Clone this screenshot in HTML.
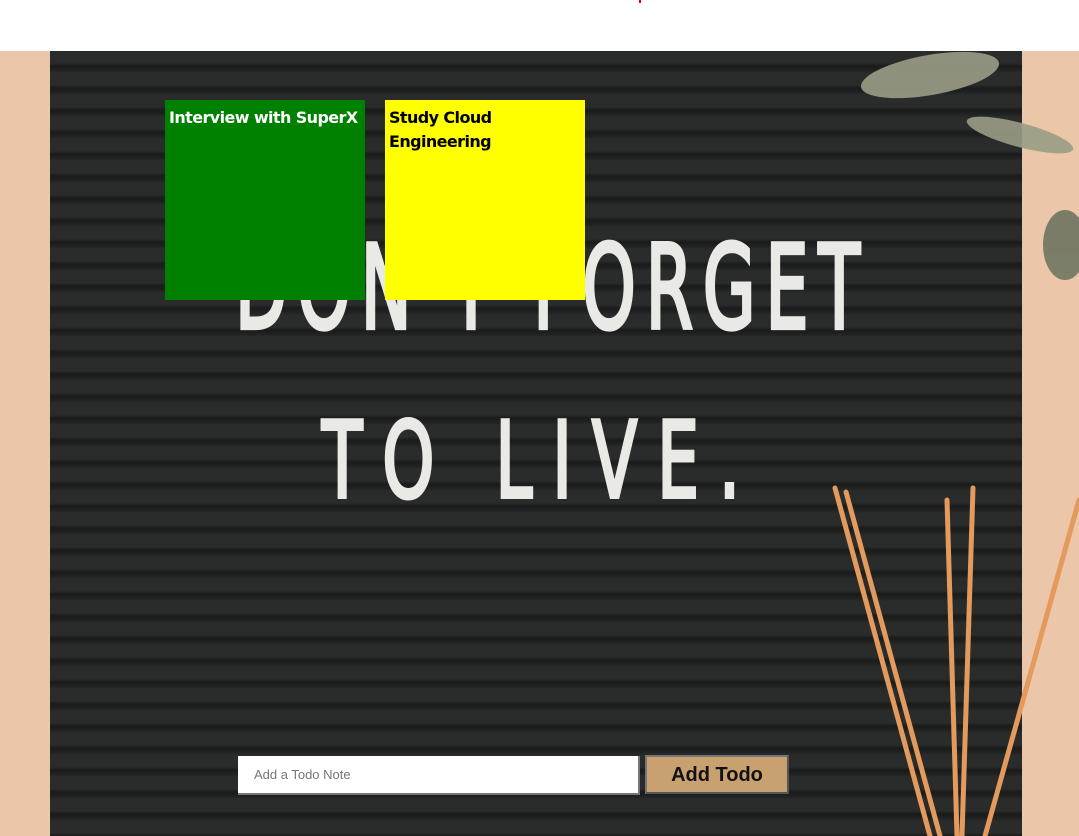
<!DOCTYPE html>
<html><head><style>
html,body{margin:0;padding:0;width:1079px;height:836px;overflow:hidden;background:#fff;font-family:"Liberation Sans",sans-serif}
.bg{position:absolute;left:0;top:51px;width:1079px;height:785px;background:#ebc6a8}
.board{position:absolute;left:50px;top:51px;width:972px;height:785px;background:#262827;
background-image:repeating-linear-gradient(180deg,#2a2c2b 0px,#2a2c2b 12px,#1a1c1b 15px,#1e201f 18px,#2a2c2b 22px)}
.note{position:absolute;top:100px;width:200px;height:200px;box-sizing:border-box;padding:6px 4px;font-family:"DejaVu Sans","Liberation Sans",sans-serif;font-weight:bold;font-size:16px;line-height:24px;letter-spacing:-0.6px}
input{position:absolute;left:238px;top:756px;width:402px;height:39px;box-sizing:border-box;border:none;border-right:2px solid #777;border-bottom:2px solid #777;padding:0 16px;font-size:13px;font-family:"Liberation Sans",sans-serif;background:#fff}
input::placeholder{color:#777}
.btn{position:absolute;left:645px;top:755px;width:144px;height:39px;box-sizing:border-box;background:#c9a06f;border:2px solid #777;border-right-color:#555;border-bottom-color:#555;font-weight:bold;font-size:20px;text-align:center;line-height:36px;color:#111}
</style></head><body>
<div style="position:absolute;left:639px;top:0;width:2px;height:3px;background:#d00"></div>
<div class="bg"></div>
<div class="board"></div>
<svg style="position:absolute;left:0;top:0" width="1079" height="836">
<g fill="#e9e9e6" stroke="#e9e9e6" stroke-width="2.5" font-family="DejaVu Sans, sans-serif">
<text transform="scale(1,1.7)" x="235" y="193" font-size="68" textLength="625" lengthAdjust="spacing">DON'T FORGET</text>
<text transform="scale(1,1.6)" x="322" y="310.6" font-size="66" textLength="418" lengthAdjust="spacing">TO LIVE.</text>
</g>
<g fill="#9a9d85" opacity="0.9">
<ellipse cx="930" cy="75" rx="70" ry="20" transform="rotate(-10 930 75)"/>
<ellipse cx="1020" cy="135" rx="55" ry="12" transform="rotate(15 1020 135)"/>
<ellipse cx="1065" cy="245" rx="22" ry="35" fill="#6f7560"/>
</g>
<g stroke="#e39a5c" stroke-width="5" stroke-linecap="round">
<line x1="835" y1="488" x2="930" y2="836"/>
<line x1="846" y1="492" x2="940" y2="836"/>
<line x1="947" y1="500" x2="957" y2="836"/>
<line x1="973" y1="488" x2="962" y2="836"/>
<line x1="1079" y1="500" x2="985" y2="836"/>
</g>
</svg>
<div class="note" style="left:165px;background:#008000;color:#fff">Interview with SuperX</div>
<div class="note" style="left:385px;background:#ffff00;color:#000">Study Cloud Engineering</div>
<input placeholder="Add a Todo Note">
<div class="btn">Add Todo</div>
</body></html>
